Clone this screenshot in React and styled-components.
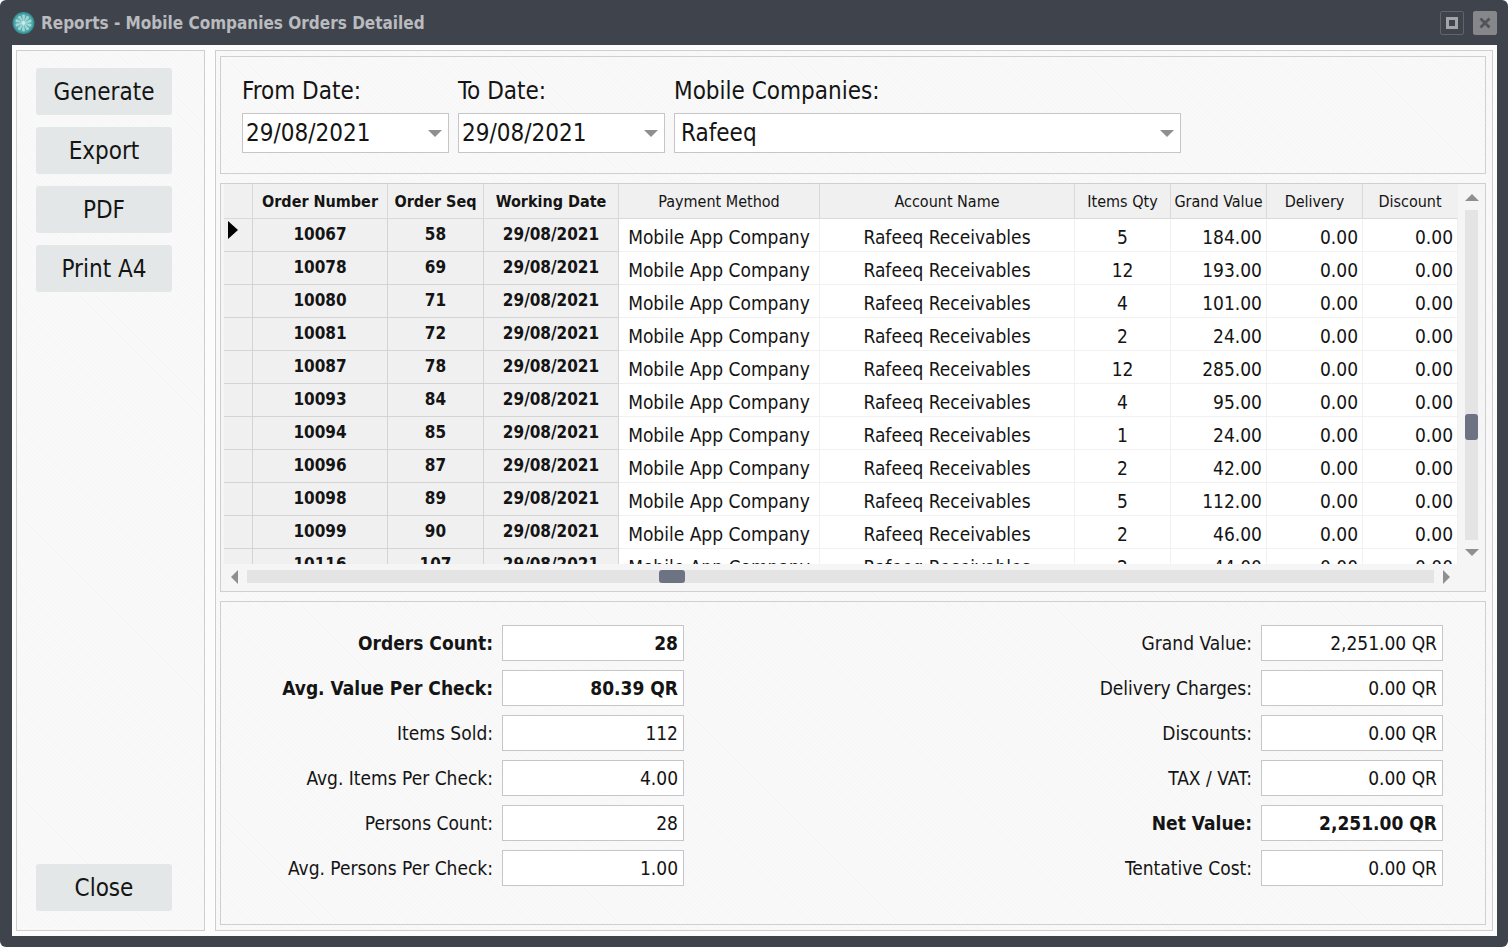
import React, { useState } from 'react';
import styled, { createGlobalStyle, css } from 'styled-components';

const GlobalStyle = createGlobalStyle`
    * { box-sizing: border-box; }
    body {
        margin: 0;
        background: #fff;
        color: #141414;
        font-family: "DejaVu Sans Condensed", "Noto Sans", sans-serif;
    }
    button, input, select { font-family: inherit; color: inherit; }
`;

const texture = css`
    background: repeating-linear-gradient(45deg, #f6f6f6 0 1px, #f9f9f9 1px 3px);
`;

const Window = styled.div`
    display: flex;
    flex-direction: column;
    min-height: 100vh;
    padding: 0 11px 11px 12px;
    background: #3f434c;
    border-radius: 6px;
`;

const TitleBar = styled.header`
    display: flex;
    align-items: center;
    gap: 6px;
    height: 45px;
`;

const Title = styled.h1`
    flex: 1;
    margin: 0;
    font-size: 17px;
    font-weight: bold;
    color: #b9bbbf;
`;

const WindowButton = styled.button`
    display: flex;
    align-items: center;
    justify-content: center;
    width: 24px;
    height: 24px;
    margin-left: 3px;
    padding: 0;
    border: 1px solid ${props => (props.$filled ? '#85878a' : '#60646b')};
    border-radius: 2px;
    background: ${props => (props.$filled ? '#85878a' : 'transparent')};
`;

const Body = styled.div`
    flex: 1;
    display: flex;
    gap: 10px;
    padding: 5px 4px;
    background: #fcfcfc;
`;

const Panel = styled.section`
    border: 1px solid #cfcfd0;
    ${texture}
`;

const Sidebar = styled(Panel).attrs({ as: 'nav' })`
    display: flex;
    flex-direction: column;
    gap: 12px;
    flex: 0 0 189px;
    padding: 17px 32px 19px 19px;
`;

const ActionButton = styled.button`
    height: 47px;
    padding: 0;
    border: 0;
    border-radius: 3px;
    background: #e3e7e7;
    font-size: 24px;
    ${props => props.$last && css`
        margin-top: auto;
    `}
`;

const Main = styled(Panel).attrs({ as: 'main' })`
    flex: 1;
    min-width: 0;
    display: flex;
    flex-direction: column;
    gap: 9px;
    padding: 5px 6px 5px 4px;
`;

const Filters = styled(Panel).attrs({ as: 'form' })`
    display: flex;
    gap: 9px;
    padding: 19px 21px 20px;
`;

const Filter = styled.div`
    display: flex;
    flex-direction: column;
    gap: 7px;
    flex: 0 1 ${props => props.$width}px;
    min-width: 0;
`;

const FilterLabel = styled.label`
    line-height: 30px;
    font-size: 24px;
`;

const ComboBox = styled.div`
    display: flex;
    align-items: center;
    height: 40px;
    border: 1px solid #c6c6c8;
    background: #fff;
`;

const DateInput = styled.input`
    flex: 1;
    min-width: 0;
    height: 100%;
    padding: 0 3px;
    border: 0;
    outline: 0;
    background: transparent;
    font-size: 24px;
`;

const DropButton = styled.button`
    display: flex;
    padding: 6px;
    border: 0;
    background: transparent;
`;

const Select = styled.select`
    flex: 1;
    height: 100%;
    margin-right: -26px;
    padding: 0 26px 0 6px;
    appearance: none;
    border: 0;
    outline: 0;
    background: transparent;
    font-size: 24px;
`;

const SelectArrow = styled.span`
    display: flex;
    padding: 6px;
    pointer-events: none;
`;

const GridPanel = styled(Panel)`
    flex: 1 1 0;
    min-height: 300px;
    display: grid;
    grid-template-columns: minmax(0, 1fr) 27px;
    grid-template-rows: minmax(0, 1fr) 27px;
    padding-left: 3px;
    background: #f5f5f5;
`;

const TableView = styled.div`
    height: 0;
    min-height: 100%;
    overflow: hidden;
`;

const Table = styled.table`
    width: 100%;
    table-layout: fixed;
    border-collapse: separate;
    border-spacing: 0;
`;

const HeadCell = styled.th`
    height: 35px;
    padding: 0;
    border-right: 1px solid #d9d9d9;
    border-bottom: 1px solid #d9d9d9;
    background: #f0f0f0;
    font-size: 16px;
    font-weight: ${props => (props.$bold ? 'bold' : 'normal')};
    white-space: nowrap;
    &:last-child { border-right-color: #f0f0f0; }
`;

const Cell = styled.td`
    height: 33px;
    padding: 3px 4px 0;
    border-right: 1px solid #f1f1f1;
    border-bottom: 1px solid #f1f1f1;
    background: #fff;
    font-size: 19px;
    line-height: 24px;
    text-align: ${props => props.$align || 'center'};
    white-space: nowrap;
    ${props => props.$fixed && css`
        padding: 0 0 2px;
        border-color: #d4d4d4;
        background: #f0f0f0;
        font-size: 17px;
        font-weight: bold;
    `}
`;

const MarkerCell = styled(Cell)`
    padding: 2px 4px 0;
    vertical-align: top;
`;

const Marker = styled.svg`
    display: block;
`;

const ScrollBar = styled.div`
    display: flex;
    flex-direction: ${props => (props.$vertical ? 'column' : 'row')};
    align-items: center;
    gap: 9px;
    padding: ${props => (props.$vertical ? '10px 0 8px' : '0 8px 2px 7px')};
`;

const Track = styled.div`
    flex: 1;
    display: flex;
    flex-direction: inherit;
    ${props => (props.$vertical ? 'width' : 'height')}: 13px;
    background: #e4e4e4;
    &::before { content: ''; flex: ${props => props.$before}; }
    &::after { content: ''; flex: ${props => props.$after}; }
`;

const Thumb = styled.div`
    flex: 0 0 26px;
    border-radius: 3px;
    background: #6d7382;
`;

const Summary = styled(Panel)`
    display: flex;
    justify-content: space-between;
    padding: 23px 42px 38px 56px;
`;

const SummaryColumn = styled.div`
    display: grid;
    grid-template-columns: auto 182px;
    align-items: center;
    gap: 9px;
    min-width: 407px;
`;

const SummaryLabel = styled.label`
    font-size: 19px;
    font-weight: ${props => (props.$bold ? 'bold' : 'normal')};
    line-height: 24px;
    text-align: right;
`;

const SummaryInput = styled.input`
    height: 36px;
    min-width: 0;
    padding: 0 5px;
    border: 1px solid #c6c6c8;
    background: #fff;
    font-size: 19px;
    font-weight: ${props => (props.$bold ? 'bold' : 'normal')};
    text-align: right;
    outline: 0;
`;

const COLUMNS = [
    { key: 'number', title: 'Order Number', width: 135, fixed: true },
    { key: 'seq', title: 'Order Seq', width: 96, fixed: true },
    { key: 'date', title: 'Working Date', width: 135, fixed: true },
    { key: 'method', title: 'Payment Method', width: 201 },
    { key: 'account', title: 'Account Name', width: 255 },
    { key: 'qty', title: 'Items Qty', width: 96 },
    { key: 'grand', title: 'Grand Value', width: 96, align: 'right' },
    { key: 'delivery', title: 'Delivery', width: 96, align: 'right' },
    { key: 'discount', title: 'Discount', width: 95, align: 'right' },
];

const ORDERS = [
    [10067, 58, 5, '184.00'],
    [10078, 69, 12, '193.00'],
    [10080, 71, 4, '101.00'],
    [10081, 72, 2, '24.00'],
    [10087, 78, 12, '285.00'],
    [10093, 84, 4, '95.00'],
    [10094, 85, 1, '24.00'],
    [10096, 87, 2, '42.00'],
    [10098, 89, 5, '112.00'],
    [10099, 90, 2, '46.00'],
    [10116, 107, 2, '44.00'],
].map(([number, seq, qty, grand]) => ({
    number,
    seq,
    qty,
    grand,
    date: '29/08/2021',
    method: 'Mobile App Company',
    account: 'Rafeeq Receivables',
    delivery: '0.00',
    discount: '0.00',
}));

const COUNTS = [
    { id: 'orders', label: 'Orders Count:', value: '28', bold: true },
    { id: 'avgValue', label: 'Avg. Value Per Check:', value: '80.39 QR', bold: true },
    { id: 'items', label: 'Items Sold:', value: '112' },
    { id: 'avgItems', label: 'Avg. Items Per Check:', value: '4.00' },
    { id: 'persons', label: 'Persons Count:', value: '28' },
    { id: 'avgPersons', label: 'Avg. Persons Per Check:', value: '1.00' },
];

const TOTALS = [
    { id: 'grand', label: 'Grand Value:', value: '2,251.00 QR' },
    { id: 'delivery', label: 'Delivery Charges:', value: '0.00 QR' },
    { id: 'discounts', label: 'Discounts:', value: '0.00 QR' },
    { id: 'tax', label: 'TAX / VAT:', value: '0.00 QR' },
    { id: 'net', label: 'Net Value:', value: '2,251.00 QR', bold: true },
    { id: 'cost', label: 'Tentative Cost:', value: '0.00 QR' },
];

const ARROWS = {
    up: '0,7 7,0 14,7',
    down: '0,0 14,0 7,7',
    left: '7,0 7,14 0,7',
    right: '0,0 7,7 0,14',
};

function Arrow({ dir }) {
    const wide = dir === 'up' || dir === 'down';
    return (
        <svg width={wide ? 14 : 7} height={wide ? 7 : 14} viewBox={wide ? '0 0 14 7' : '0 0 7 14'} aria-hidden="true">
            <polygon points={ARROWS[dir]} fill="#8f8f8f" />
        </svg>
    );
}

function Logo() {
    const spokes = Array.from({ length: 10 }, (_, i) => i * 36);
    return (
        <svg width="23" height="24" viewBox="0 0 24 24" aria-hidden="true">
            <circle cx="12" cy="12" r="11.4" fill="#3a9297" />
            <circle cx="12" cy="12" r="10" fill="#4fa9ab" />
            {spokes.map(angle => (
                <path
                    key={angle}
                    d="M11.6 11 L10.4 4.2 Q12 2.2 13.8 4.4 L12.5 11 Z"
                    fill="#9fd6d6"
                    transform={`rotate(${angle} 12 12)`}
                />
            ))}
            <circle cx="12" cy="12" r="2" fill="#c9ebea" />
        </svg>
    );
}

function DateFilter({ id, label }) {
    const [value, setValue] = useState('29/08/2021');
    return (
        <Filter $width={207}>
            <FilterLabel htmlFor={id}>{label}</FilterLabel>
            <ComboBox>
                <DateInput id={id} value={value} onChange={e => setValue(e.target.value)} />
                <DropButton type="button" aria-label={label}><Arrow dir="down" /></DropButton>
            </ComboBox>
        </Filter>
    );
}

function SummaryList({ rows }) {
    return (
        <SummaryColumn>
            {rows.map(row => (
                <React.Fragment key={row.id}>
                    <SummaryLabel htmlFor={`sum_${row.id}`} $bold={row.bold}>{row.label}</SummaryLabel>
                    <SummaryInput id={`sum_${row.id}`} value={row.value} $bold={row.bold} readOnly />
                </React.Fragment>
            ))}
        </SummaryColumn>
    );
}

function OrdersTable() {
    return (
        <Table>
            <colgroup>
                <col width={29} />
                {COLUMNS.map(col => <col key={col.key} width={col.width} />)}
            </colgroup>
            <thead>
                <tr>
                    <HeadCell />
                    {COLUMNS.map(col => <HeadCell key={col.key} $bold={col.fixed}>{col.title}</HeadCell>)}
                </tr>
            </thead>
            <tbody>
                {ORDERS.map((order, i) => (
                    <tr key={order.number}>
                        <MarkerCell $fixed>
                            {i === 0 && (
                                <Marker width="10" height="18" viewBox="0 0 10 18" aria-hidden="true">
                                    <polygon points="0,0 10,9 0,18" fill="#000" />
                                </Marker>
                            )}
                        </MarkerCell>
                        {COLUMNS.map(col => (
                            <Cell key={col.key} $fixed={col.fixed} $align={col.align}>{order[col.key]}</Cell>
                        ))}
                    </tr>
                ))}
            </tbody>
        </Table>
    );
}

export default function App() {
    return (
        <>
            <GlobalStyle />
            <Window>
                <TitleBar>
                    <Logo />
                    <Title>Reports - Mobile Companies Orders Detailed</Title>
                    <WindowButton aria-label="Maximize">
                        <svg width="12" height="12" viewBox="0 0 12 12">
                            <rect x="1.5" y="1.5" width="9" height="9" fill="none" stroke="#a2a4a7" strokeWidth="3" />
                        </svg>
                    </WindowButton>
                    <WindowButton aria-label="Close window" $filled>
                        <svg width="12" height="12" viewBox="0 0 12 12">
                            <path d="M1.5 1.5 L10.5 10.5 M10.5 1.5 L1.5 10.5" stroke="#50535a" strokeWidth="2.8" />
                        </svg>
                    </WindowButton>
                </TitleBar>
                <Body>
                    <Sidebar>
                        <ActionButton>Generate</ActionButton>
                        <ActionButton>Export</ActionButton>
                        <ActionButton>PDF</ActionButton>
                        <ActionButton>Print A4</ActionButton>
                        <ActionButton $last>Close</ActionButton>
                    </Sidebar>
                    <Main>
                        <Filters>
                            <DateFilter id="fromDate" label="From Date:" />
                            <DateFilter id="toDate" label="To Date:" />
                            <Filter $width={507}>
                                <FilterLabel htmlFor="company">Mobile Companies:</FilterLabel>
                                <ComboBox>
                                    <Select id="company" defaultValue="Rafeeq">
                                        <option>Rafeeq</option>
                                    </Select>
                                    <SelectArrow><Arrow dir="down" /></SelectArrow>
                                </ComboBox>
                            </Filter>
                        </Filters>
                        <GridPanel>
                            <TableView><OrdersTable /></TableView>
                            <ScrollBar $vertical>
                                <Arrow dir="up" />
                                <Track $vertical $before={203} $after={99}><Thumb /></Track>
                                <Arrow dir="down" />
                            </ScrollBar>
                            <ScrollBar>
                                <Arrow dir="left" />
                                <Track $before={411} $after={746}><Thumb /></Track>
                                <Arrow dir="right" />
                            </ScrollBar>
                        </GridPanel>
                        <Summary>
                            <SummaryList rows={COUNTS} />
                            <SummaryList rows={TOTALS} />
                        </Summary>
                    </Main>
                </Body>
            </Window>
        </>
    );
}
